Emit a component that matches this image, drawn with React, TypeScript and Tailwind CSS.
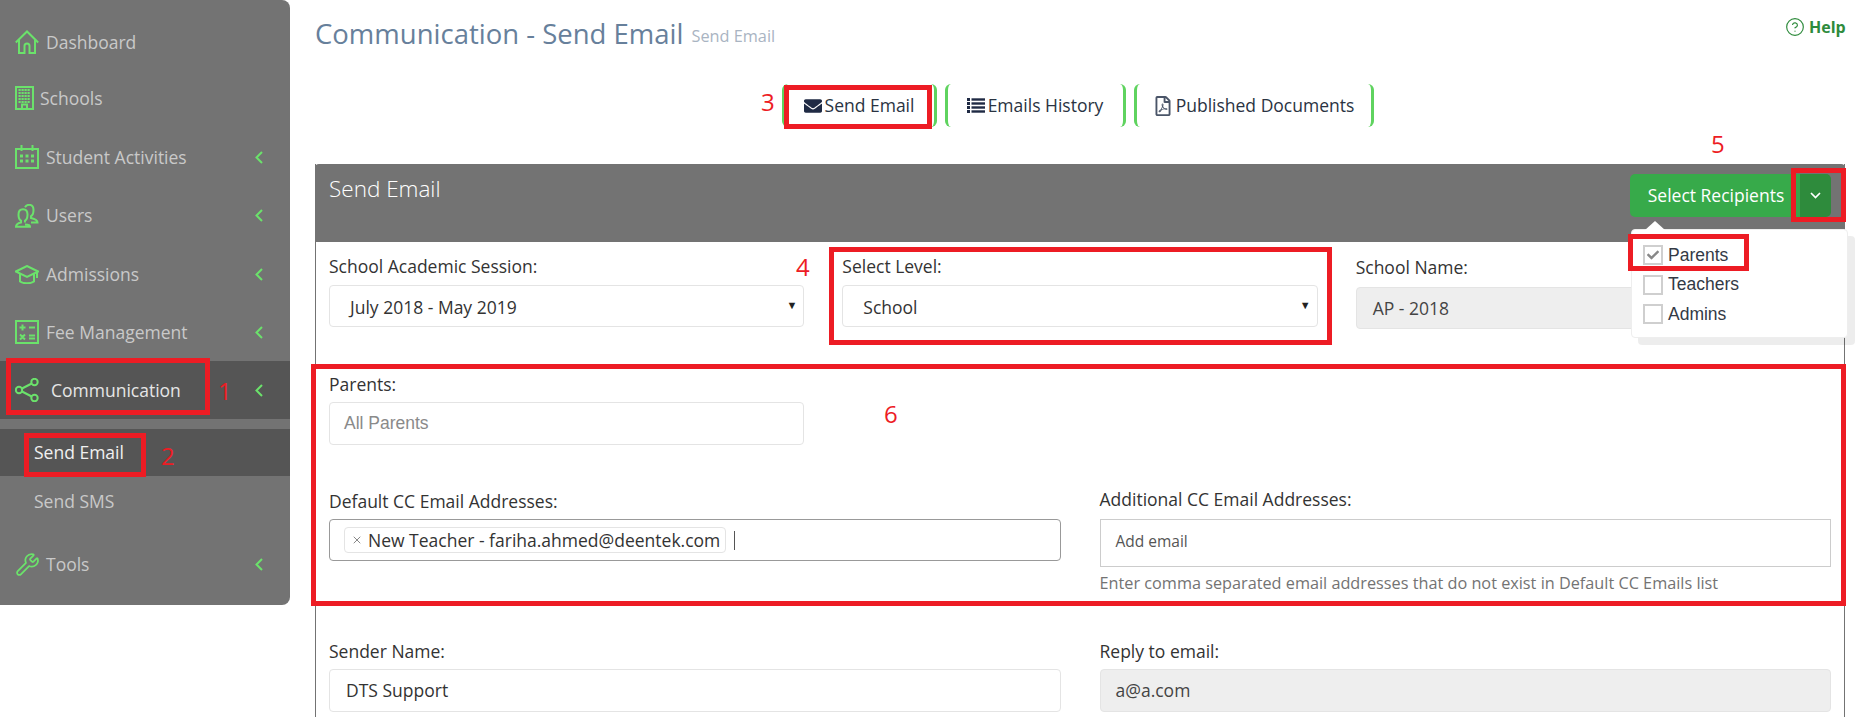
import React from "react";
import { FaEnvelope, FaRegFilePdf, FaCheck } from "react-icons/fa";
import { Wrench, CircleHelp, X } from "lucide-react";

const G = "#6be26b";

const Ic = ({ children, w = 24, h = 24 }: { children: React.ReactNode; w?: number; h?: number }) => (
  <svg width={w} height={h} viewBox={`0 0 ${w} ${h}`} fill="none" stroke={G} strokeWidth="2" className="shrink-0">
    {children}
  </svg>
);

const HomeIcon = () => (
  <Ic>
    <path d="M.8 12.500 12 1.500l11.200 11" />
    <path d="M4 10v13h5.500v-7a2.500 2.500 0 0 1 5 0v7H20V10" />
  </Ic>
);
const SchoolIcon = () => (
  <svg width="19" height="24" viewBox="0 0 19 24" fill="none" className="shrink-0">
    <rect x="1" y="1" width="17" height="22" stroke={G} strokeWidth="2" />
    <path d="M3.500 4h12M3.500 7h12M3.500 10h12M3.500 13h12M3.500 16h12" stroke={G} strokeWidth="2.200" strokeDasharray="2.200 .8" />
    <path d="M7 22v-3.500h5V22" stroke={G} strokeWidth="2" />
  </svg>
);
const CalIcon = () => (
  <Ic>
    <rect x="1" y="4" width="22" height="19" stroke={G} />
    <path d="M6.500 0v6M17.500 0v6" />
    <path d="M5 11h3M10.500 11h3M16 11h3M5 16h3M10.500 16h3M16 16h3" strokeWidth="2.800" />
  </Ic>
);
const UsersIcon = () => (
  <Ic>
    <path d="M10 20.500c4 0 5 .4 5 2.200H1c0-2.500 2-3.500 5-4.200v-1.800C4 15.500 3.500 13.500 3.500 10.500 3.500 7 5.500 5.200 8 5.200s4.500 1.800 4.500 5.300c0 3-.5 5-2.500 6.200v1.800" />
    <path d="M10 3.200C11 1.500 12.500.8 14 .8c2.500 0 4.500 1.800 4.500 5.200 0 3-.5 5-2.500 6.200v1.800c3 .7 6.500 1.800 6.500 4.500H16" />
  </Ic>
);
const GradIcon = () => (
  <Ic h={19}>
    <path d="M.8 6.500 12 1l11.200 5.500L12 12z" />
    <path d="M5 9v7.500c2 1.300 5 1.800 7 1.800s5-.5 7-1.800V9" />
    <path d="M22 7v6" />
  </Ic>
);
const CalcIcon = () => (
  <Ic>
    <rect x="1" y="1" width="22" height="22" stroke={G} />
    <path d="M4.500 7.500h6M7.500 4.500v6M14 7.500h6M14 15.500h6M14 18.500h6M5 14.500l5 5M10 14.500l-5 5" strokeWidth="2" />
  </Ic>
);
const ShareIcon = () => (
  <Ic>
    <circle cx="19.500" cy="4" r="3.200" />
    <circle cx="4" cy="12" r="3.200" />
    <circle cx="19.500" cy="20" r="3.200" />
    <path d="M7 10.500 16.700 5.500M7 13.500l9.700 5" />
  </Ic>
);
const ListIcon = () => (
  <svg width="18" height="15" viewBox="0 0 18 15" fill="#1f2a44" className="shrink-0">
    <rect x="0" y="0" width="3" height="3" /><rect x="4.500" y=".3" width="13.500" height="2.400" />
    <rect x="0" y="4" width="3" height="3" /><rect x="4.500" y="4.300" width="13.500" height="2.400" />
    <rect x="0" y="8" width="3" height="3" /><rect x="4.500" y="8.300" width="13.500" height="2.400" />
    <rect x="0" y="12" width="3" height="3" /><rect x="4.500" y="12.300" width="13.500" height="2.400" />
  </svg>
);
const Chevron = () => (
  <svg width="8" height="13" viewBox="0 0 8 13" fill="none" stroke={G} strokeWidth="2" className="ml-auto shrink-0">
    <path d="M7 1 1.500 6.500 7 12" />
  </svg>
);

const Row = ({ icon, label, h, gap, chevron = true, active, cls = "" }: { icon: React.ReactNode; label: string; h: string; gap: string; chevron?: boolean; active?: boolean; cls?: string }) => (
  <div className={`flex items-center pl-[15px] pr-[27px] ${h} ${cls} ${active ? "bg-[#555555]" : ""}`}>
    <span className={`flex items-center ${gap}`}>
      {icon}
      <span className={`text-[17.500px] ${active ? "text-[#e6e6e6]" : "text-[#c9c9c9]"}`}>{label}</span>
    </span>
    {chevron && <Chevron />}
  </div>
);

const Label = ({ children }: { children: React.ReactNode }) => (
  <div className="h-[24px] leading-[24px] text-[17.500px] text-[#333333]">{children}</div>
);

const fieldBase = "rounded-[4px] border border-[#e4e4e4] flex items-center text-[17.500px] h-[42px]";

const Tab = ({ icon, label, cls }: { icon: React.ReactNode; label: string; cls: string }) => (
  <div className={`h-[43px] rounded-[6px] border-x-[3px] border-[#5fd35f] flex items-center justify-center gap-[3px] text-[17.500px] text-[#2a3342] ${cls}`}>
    {icon}
    <span>{label}</span>
  </div>
);

const Check = ({ checked }: { checked?: boolean }) => (
  <span className="w-[20px] h-[20px] border-2 border-[#cfcfcf] flex items-center justify-center text-[#888888]">
    {checked && <FaCheck size={12} />}
  </span>
);

const RedBox = ({ cls }: { cls: string }) => <div className={`absolute border-[5px] border-[#ed1c24] pointer-events-none ${cls}`} />;
const Num = ({ n, cls }: { n: string; cls: string }) => (
  <div className={`absolute text-[24px] leading-[30px] text-[#ed1c24] ${cls}`}>{n}</div>
);

export default function App() {
  return (
    <div className="relative h-[717px] w-full overflow-hidden bg-white font-['Open_Sans',sans-serif] flex items-start">
      {/* Sidebar */}
      <aside className="w-[290px] h-[605px] shrink-0 bg-[#737373] rounded-r-[8px] pt-[13px]">
        <Row icon={<HomeIcon />} label="Dashboard" h="h-[58px]" gap="gap-[7px]" chevron={false} />
        <Row icon={<SchoolIcon />} label="Schools" h="h-[57px]" gap="gap-[6px]" chevron={false} cls="pb-[3px]" />
        <Row icon={<CalIcon />} label="Student Activities" h="h-[58px]" gap="gap-[7px]" />
        <Row icon={<UsersIcon />} label="Users" h="h-[59px]" gap="gap-[7px]" />
        <Row icon={<GradIcon />} label="Admissions" h="h-[58px]" gap="gap-[7px]" />
        <Row icon={<CalcIcon />} label="Fee Management" h="h-[58px]" gap="gap-[7px]" />
        <Row icon={<ShareIcon />} label="Communication" h="h-[58px]" gap="gap-[12px]" active />
        <div className="mt-[10px] h-[47px] bg-[#555555] pl-[34px] flex items-center text-[17.500px] text-[#f0f0f0]">Send Email</div>
        <div className="h-[50px] pl-[34px] flex items-center text-[17.500px] text-[#c9c9c9]">Send SMS</div>
        <Row icon={<Wrench size={25} color={G} strokeWidth={1.700} className="shrink-0" />} label="Tools" h="h-[76px]" gap="gap-[6px]" />
      </aside>

      {/* Main */}
      <main className="flex-1 min-w-0 pl-[25px] pr-[22px]">
        <div className="h-[84px] pt-[15px] flex items-start">
          <h1 className="text-[27.500px] leading-[38px] text-[#67809b]">Communication - Send Email</h1>
          <span className="ml-[8px] mt-[11px] text-[16.300px] leading-[20px] text-[#a9b4c2]">Send Email</span>
        </div>

        <div className="flex justify-center gap-[8px] pr-[5px]">
          <Tab cls="w-[155px]" icon={<FaEnvelope size={18} className="text-[#1f2a44]" />} label="Send Email" />
          <Tab cls="w-[181px]" icon={<ListIcon />} label="Emails History" />
          <Tab cls="w-[240px]" icon={<FaRegFilePdf size={20} className="text-[#4a5568]" />} label="Published Documents" />
        </div>

        <section className="mt-[37px] border-x border-[#737373] h-[560px]">
          <header className="h-[78px] -mx-px bg-[#737373] rounded-t-[4px] flex justify-between pl-[14px] pr-[14px] pt-[10px]">
            <div className="text-[22.500px] leading-[30px] text-white font-light">Send Email</div>
            <div className="flex h-[43px] rounded-[5px] overflow-hidden text-[17.500px] text-white">
              <div className="w-[170px] bg-[#37aa4a] flex items-center justify-center pl-[2px]">Select Recipients</div>
              <div className="w-[31px] bg-[#2e8b3c] flex items-center justify-center">
                <svg width="11" height="7" viewBox="0 0 11 7" fill="none" stroke="white" strokeWidth="1.700"><path d="M1 1l4.500 4.500L10 1" /></svg>
              </div>
            </div>
          </header>

          <div className="px-[13px]">
            <div className="grid grid-cols-3 gap-x-[38px] pt-[12px]">
              <div>
                <Label>School Academic Session:</Label>
                <div className={`mt-[7px] pl-[20px] pr-[6px] text-[#333333] justify-between ${fieldBase}`}>
                  <span className="pt-[3px]">July 2018 - May 2019</span><span className="text-[11px] text-[#222222] pb-[1px]">▼</span>
                </div>
              </div>
              <div>
                <Label>Select Level:</Label>
                <div className={`mt-[7px] pl-[20px] pr-[6px] text-[#333333] justify-between ${fieldBase}`}>
                  <span className="pt-[3px]">School</span><span className="text-[11px] text-[#222222] pb-[1px]">▼</span>
                </div>
              </div>
              <div className="pt-[1px]">
                <Label>School Name:</Label>
                <div className={`mt-[8px] pl-[16px] bg-[#eeeeee] text-[#444444] ${fieldBase}`}>AP - 2018</div>
              </div>
            </div>

            <div className="grid grid-cols-3 gap-x-[38px] mt-[43px]">
              <div>
                <Label>Parents:</Label>
                <div className={`mt-[6px] pl-[14px] font-['Liberation_Sans',sans-serif] text-[#8a8a8a] !h-[43px] ${fieldBase}`}>All Parents</div>
              </div>
            </div>

            <div className="grid grid-cols-2 gap-x-[39px] mt-[42px]">
              <div className="pt-[2px]">
                <Label>Default CC Email Addresses:</Label>
                <div className="mt-[6px] h-[42px] rounded-[4px] border border-[#999999] flex items-center pl-[14px]">
                  <span className="h-[26px] w-[382px] rounded-[4px] border border-[#e4e4e4] flex items-center pl-[6px] gap-[5px] text-[17.500px] text-[#333333] whitespace-nowrap">
                    <X size={12} color="#888888" className="shrink-0" />New Teacher - fariha.ahmed@deentek.com
                  </span>
                  <span className="ml-[8px] w-px h-[19px] bg-[#555555]" />
                </div>
              </div>
              <div>
                <Label>Additional CC Email Addresses:</Label>
                <div className="mt-[8px] h-[48px] border border-[#cccccc] flex items-center pl-[15px] pb-[3px] text-[15.500px] text-[#555555]">Add email</div>
                <div className="mt-[4px] h-[24px] leading-[24px] text-[16.250px] text-[#737373] whitespace-nowrap">Enter comma separated email addresses that do not exist in Default CC Emails list</div>
              </div>
            </div>

            <div className="grid grid-cols-2 gap-x-[39px] mt-[44px]">
              <div>
                <Label>Sender Name:</Label>
                <div className={`mt-[6px] pl-[16px] text-[#333333] !h-[43px] ${fieldBase}`}>DTS Support</div>
              </div>
              <div>
                <Label>Reply to email:</Label>
                <div className={`mt-[6px] pl-[15px] bg-[#eeeeee] text-[#444444] !h-[43px] ${fieldBase}`}>a@a.com</div>
              </div>
            </div>
          </div>
        </section>
      </main>

      {/* Recipients dropdown */}
      <div className="absolute left-[1631px] top-[229px] w-[217px] h-[109px] rounded-[4px] bg-white border border-[#eeeeee] shadow-[7px_7px_0_rgba(0,0,0,0.07)] pl-[11px] pt-[15px] flex flex-col gap-[9.500px] font-['Liberation_Sans',sans-serif] text-[17.500px] text-[#333a45]">
        <div className="absolute left-[13px] -top-[9px] w-0 h-0 border-x-[10px] border-x-transparent border-b-[9px] border-b-white" />
        <label className="flex items-center gap-[5px] h-[20px]"><Check checked />Parents</label>
        <label className="flex items-center gap-[5px] h-[20px]"><Check />Teachers</label>
        <label className="flex items-center gap-[5px] h-[20px]"><Check />Admins</label>
      </div>

      {/* Help */}
      <div className="absolute left-[1785px] top-[15px] flex items-center gap-[4px] text-[16px] font-bold text-[#2e8b3c]">
        <CircleHelp size={20} strokeWidth={1.400} />Help
      </div>

      {/* Annotations */}
      <RedBox cls="left-[6px] top-[358px] w-[204px] h-[57px]" />
      <RedBox cls="left-[24px] top-[433px] w-[122px] h-[44px]" />
      <RedBox cls="left-[784px] top-[85px] w-[148px] h-[44px]" />
      <RedBox cls="left-[829px] top-[247px] w-[503px] h-[98px]" />
      <RedBox cls="left-[1791px] top-[168px] w-[55px] h-[54px]" />
      <RedBox cls="left-[1628px] top-[234px] w-[121px] h-[37px]" />
      <RedBox cls="left-[311px] top-[364px] w-[1535px] h-[242px]" />
      <Num n="1" cls="left-[218px] top-[376px]" />
      <Num n="2" cls="left-[161px] top-[441px]" />
      <Num n="3" cls="left-[761px] top-[87px]" />
      <Num n="4" cls="left-[796px] top-[252px]" />
      <Num n="5" cls="left-[1711px] top-[129px]" />
      <Num n="6" cls="left-[884px] top-[399px]" />
    </div>
  );
}
